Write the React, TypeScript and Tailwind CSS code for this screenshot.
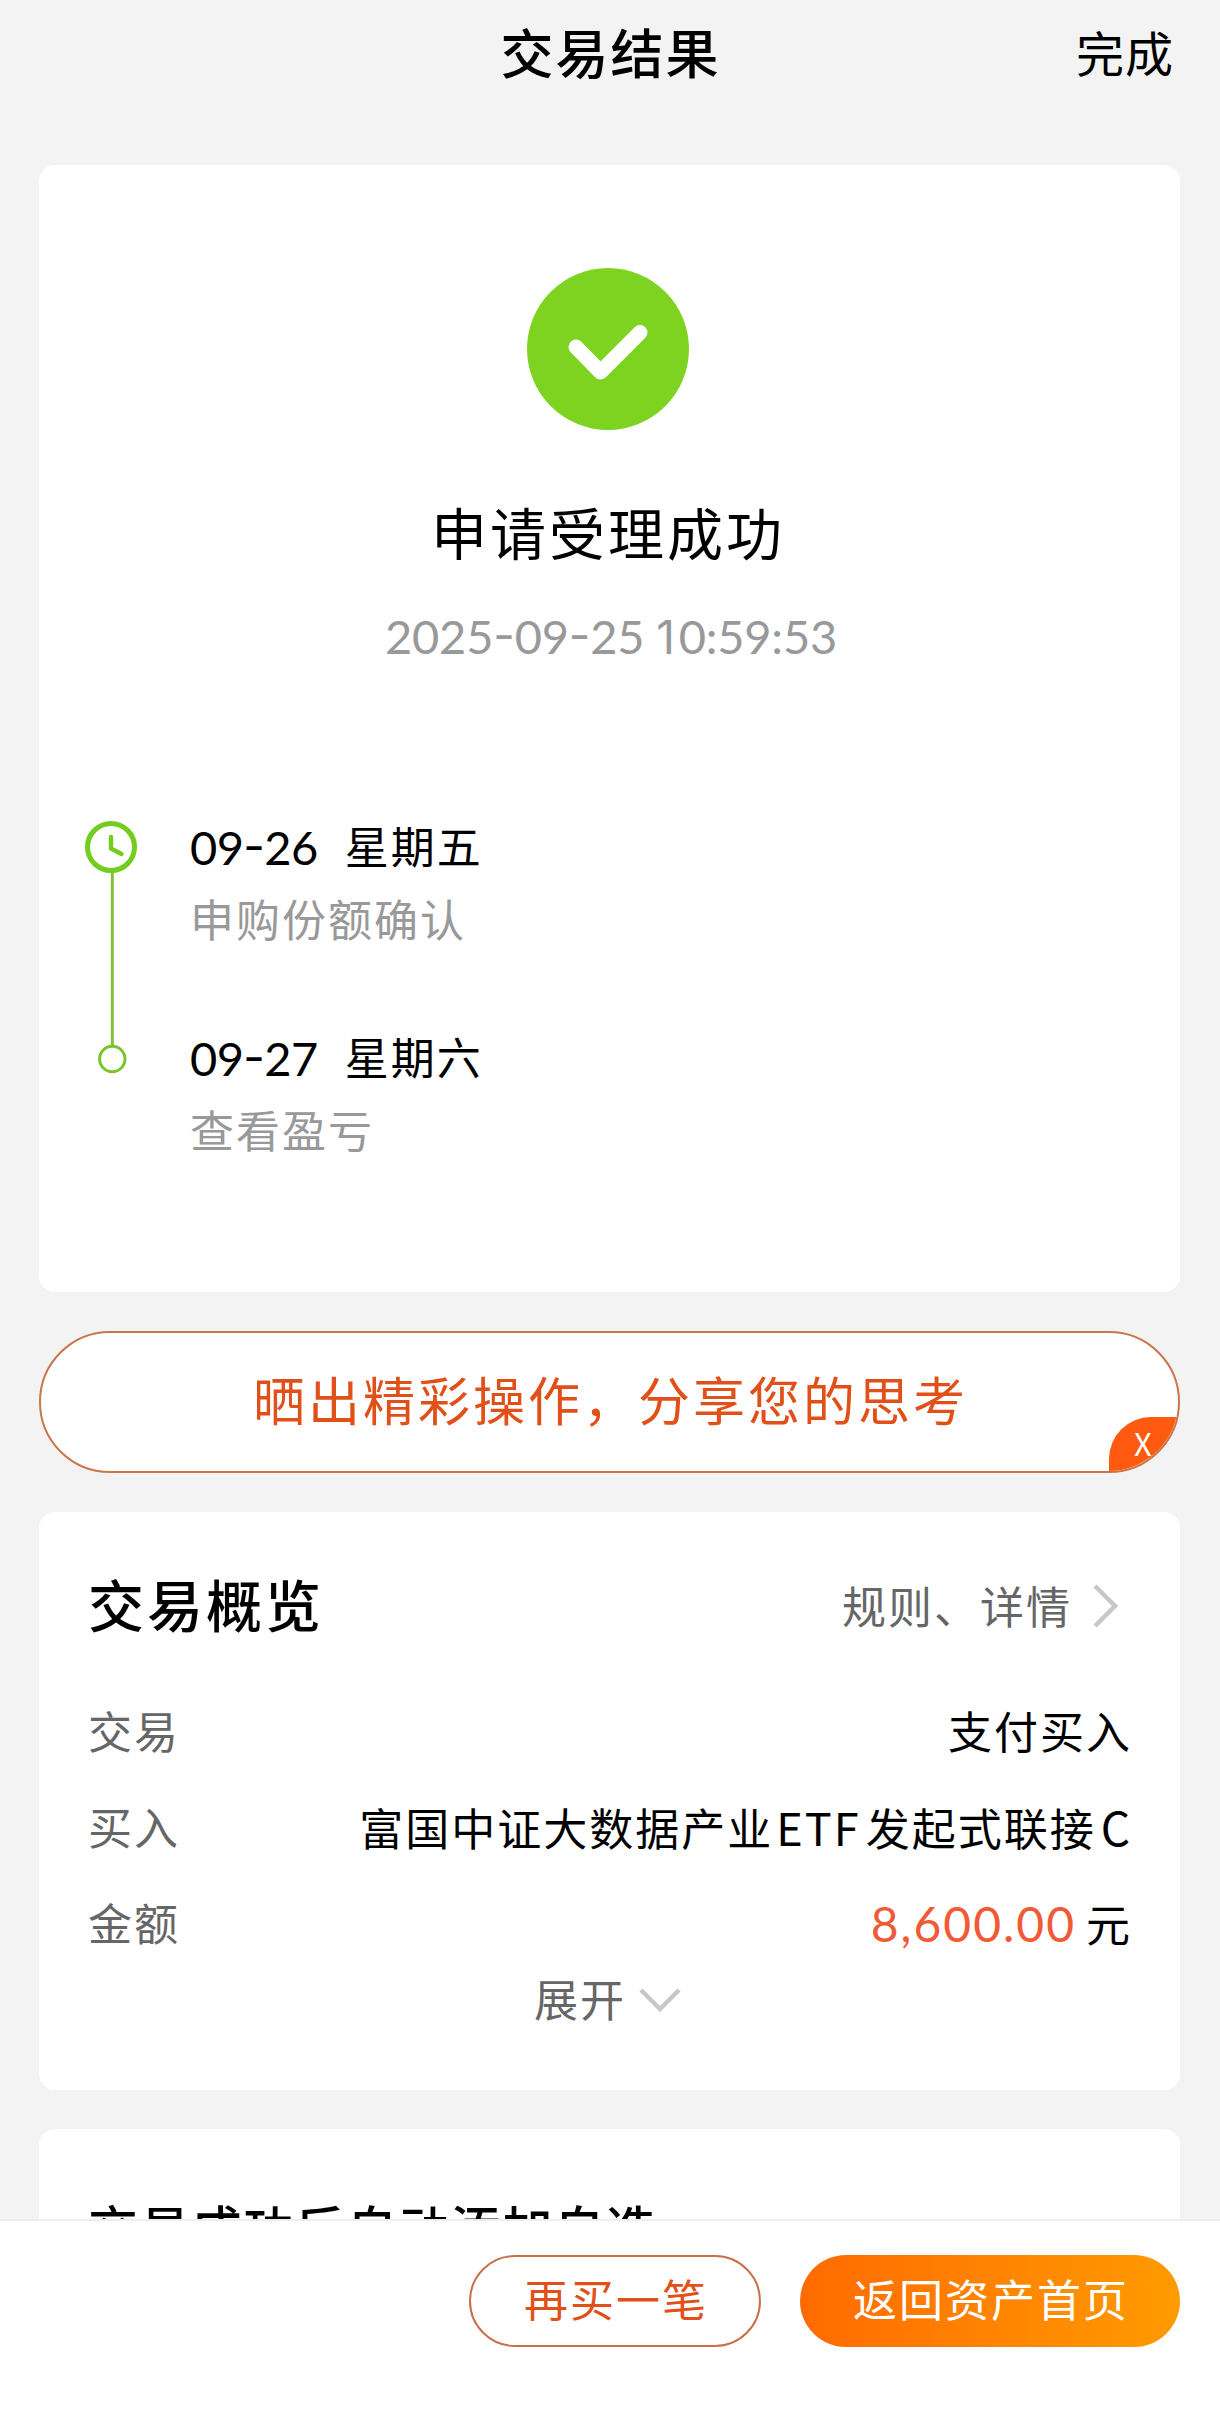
import { ReactNode } from "react";

interface Step {
  date: string;
  weekday: string;
  label: string;
}

const steps: Step[] = [
  { date: "09-26", weekday: "星期五", label: "申购份额确认" },
  { date: "09-27", weekday: "星期六", label: "查看盈亏" },
];

// Lato numerals, with a centred dash and a footless "1" taken from Inter
function Digits({ children }: { children: string }) {
  return (
    <span className="font-[Lato,'Noto_Sans_CJK_SC',sans-serif]">
      {children.split(/([-1])/).map((part, i) => {
        if (part === "-")
          return (
            <span key={i} className="relative -top-[2px] font-[Inter,sans-serif]">
              -
            </span>
          );
        if (part === "1")
          return (
            <span key={i} className="mr-[4px] text-[46px] font-[Inter,sans-serif]">
              1
            </span>
          );
        return part;
      })}
    </span>
  );
}

function SuccessIcon() {
  return (
    <svg width="162" height="162" viewBox="0 0 162 162" fill="none">
      <circle cx="81" cy="81" r="81" fill="#7ed321" />
      <path
        d="M49 79L73.5 104L113 64.5"
        stroke="#fff"
        strokeWidth="15"
        strokeLinecap="round"
        strokeLinejoin="round"
      />
    </svg>
  );
}

function TimelineTrack() {
  return (
    <svg width="54" height="254" viewBox="0 0 54 254" fill="none">
      <path d="M28.3 52V226" stroke="#80c135" strokeWidth="3" />
      <circle cx="27" cy="27" r="23.5" stroke="#72cd1f" strokeWidth="5" />
      <path
        d="M27 17V28.5L37.5 34"
        stroke="#72cd1f"
        strokeWidth="4.5"
        strokeLinecap="round"
        strokeLinejoin="round"
      />
      <circle cx="28.3" cy="239" r="12.7" stroke="#7ac52c" strokeWidth="3" />
    </svg>
  );
}

function Row({ label, children }: { label: string; children: ReactNode }) {
  return (
    <div className="flex h-24 items-center justify-between">
      <span className="text-[#666]">{label}</span>
      <span className="-mr-px whitespace-nowrap">{children}</span>
    </div>
  );
}

export default function App() {
  return (
    <div className="flex h-[2430px] w-[1220px] flex-col overflow-hidden bg-[#f3f3f3] font-['Noto_Sans_CJK_SC',sans-serif] text-[44px] leading-none tracking-[2px] text-black">
      <header className="grid h-[165px] shrink-0 grid-cols-3 items-start pr-[46px] pl-[47px] pt-[25px]">
        <span />
        <h1 className="text-center text-[53px] font-medium tracking-[2px]">交易结果</h1>
        <button className="justify-self-end pt-[2px] text-[48px] leading-none tracking-[1px]">
          完成
        </button>
      </header>

      <main className="flex min-h-0 flex-1 flex-col gap-[39px] overflow-hidden pr-[40px] pl-[39px]">
        <section className="flex h-[1127px] shrink-0 flex-col items-center rounded-2xl bg-white pt-[103px] pr-[3px]">
          <SuccessIcon />
          <h2 className="mt-[73px] text-[56px] tracking-[3px]">申请受理成功</h2>
          <p className="mt-[51px] pl-[6px] text-[47px] tracking-[-0.2px] text-[#999]">
            <Digits>2025-09-25 10:59:53</Digits>
          </p>
          <div className="mt-[160px] flex w-full pl-[45px]">
            <TimelineTrack />
            <div className="ml-[52px] flex flex-col gap-[95px]">
              {steps.map((step) => (
                <div key={step.date} className="-mt-px flex h-[117px] flex-col gap-[25px]">
                  <div className="flex items-center gap-[27px]">
                    <span className="pt-[2px] text-[47px] tracking-[-0.6px]">
                      <Digits>{step.date}</Digits>
                    </span>
                    {step.weekday}
                  </div>
                  <span className="text-[#999]">{step.label}</span>
                </div>
              ))}
            </div>
          </div>
        </section>

        <section className="relative flex h-[142px] shrink-0 items-center justify-center overflow-hidden rounded-full border-2 border-[#c8764a] bg-white pb-[6px] pl-[2px] text-[52px] tracking-[3px] text-[#e2501a]">
          晒出精彩操作，分享您的思考
          <button className="absolute right-0 bottom-0 flex h-[54px] w-[69px] items-center rounded-tl-[42px] bg-[#ff5a10] pb-[4px] pl-[25px] text-[31px] text-white">
            X
          </button>
        </section>

        <section className="flex h-[578px] shrink-0 flex-col rounded-2xl bg-white px-[49px] pt-[63px]">
          <div className="flex items-center justify-between">
            <h2 className="text-[56px] font-medium tracking-[3px]">交易概览</h2>
            <button className="flex items-center gap-[20px] pt-[3px] pr-[11px] leading-none tracking-[2px] text-[#666]">
              规则、详情
              <svg width="28" height="44" viewBox="0 0 28 44" fill="none">
                <path d="M3 3L23 23L3 43" stroke="#c8c8c8" strokeWidth="4.5" />
              </svg>
            </button>
          </div>
          <div className="mt-[51px]">
            <Row label="交易">支付买入</Row>
            <Row label="买入">
              富国中证大数据产业
              <span className="mr-[5px] ml-[3px] text-[45px]">ETF</span>
              发起式联接
              <span className="ml-[5px] text-[46px]">C</span>
            </Row>
            <Row label="金额">
              <span className="mr-[10px] text-[48px] text-[#f15a36]">
                <Digits>8,600.00</Digits>
              </span>
              元
            </Row>
          </div>
          <button className="mt-[6px] flex items-center justify-center gap-[13px] pr-[4px] leading-none tracking-[2px] text-[#666]">
            展开
            <svg width="42" height="28" viewBox="0 0 42 28" fill="none">
              <path d="M2 6L21 25L40 6" stroke="#c8c8c8" strokeWidth="4.5" />
            </svg>
          </button>
        </section>

        <section className="h-[300px] shrink-0 rounded-t-2xl bg-white px-[49px] pt-[72px]">
          <h2 className="text-[50px] font-medium tracking-[1.8px]">交易成功后自动添加自选</h2>
        </section>
      </main>

      <footer className="flex h-[211px] shrink-0 justify-end gap-[39px] border-t-2 border-[#eee] bg-white px-[40px] pt-[34px]">
        <button className="flex h-[92px] w-[292px] items-center justify-center rounded-full border-2 border-[#c8704a] pb-[6px] pl-[2px] leading-none tracking-[2px] text-[#e2501a]">
          再买一笔
        </button>
        <button className="flex h-[92px] w-[380px] items-center justify-center rounded-full bg-linear-to-r from-[#ff6a00] to-[#ff9a00] pb-[6px] pl-[2px] leading-none tracking-[2px] text-white">
          返回资产首页
        </button>
      </footer>
    </div>
  );
}
